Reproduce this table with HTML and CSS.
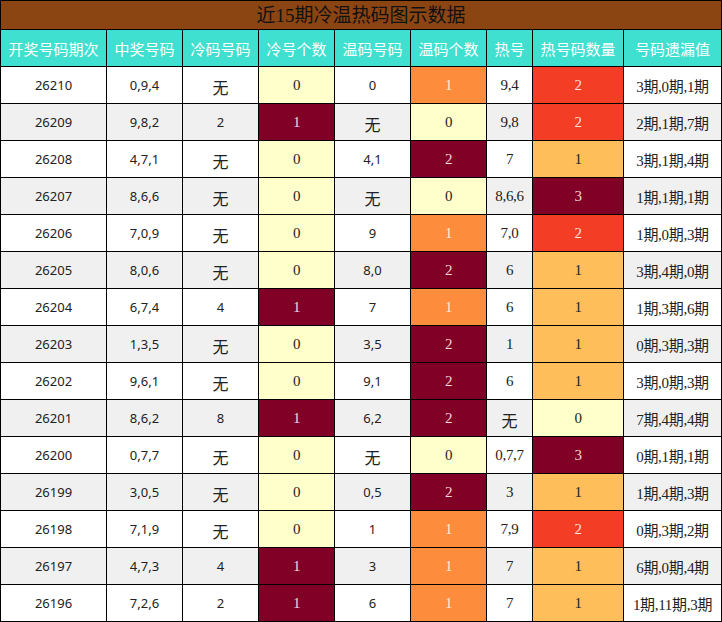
FILE: index.html
```html
<!DOCTYPE html>
<html>
<head>
<meta charset="utf-8">
<link rel="stylesheet" href="styles.css">
</head>
<body>
<div class="grid">
  <div class="title">近15期冷温热码图示数据</div>
  <div class="row head">
    <div class="c">开奖号码期次</div><div class="c">中奖号码</div><div class="c">冷码号码</div><div class="c">冷号个数</div><div class="c">温码号码</div><div class="c">温码个数</div><div class="c">热号</div><div class="c">热号码数量</div><div class="c">号码遗漏值</div>
  </div>
  <div class="row">
    <div class="c s">26210</div><div class="c s">0,9,4</div><div class="c k">无</div><div class="c y">0</div><div class="c s">0</div><div class="c o">1</div><div class="c">9,4</div><div class="c r">2</div><div class="c">3期,0期,1期</div>
  </div>
  <div class="row alt">
    <div class="c s">26209</div><div class="c s">9,8,2</div><div class="c s">2</div><div class="c d">1</div><div class="c k">无</div><div class="c y">0</div><div class="c">9,8</div><div class="c r">2</div><div class="c">2期,1期,7期</div>
  </div>
  <div class="row">
    <div class="c s">26208</div><div class="c s">4,7,1</div><div class="c k">无</div><div class="c y">0</div><div class="c s">4,1</div><div class="c d">2</div><div class="c">7</div><div class="c l">1</div><div class="c">3期,1期,4期</div>
  </div>
  <div class="row alt">
    <div class="c s">26207</div><div class="c s">8,6,6</div><div class="c k">无</div><div class="c y">0</div><div class="c k">无</div><div class="c y">0</div><div class="c">8,6,6</div><div class="c d">3</div><div class="c">1期,1期,1期</div>
  </div>
  <div class="row">
    <div class="c s">26206</div><div class="c s">7,0,9</div><div class="c k">无</div><div class="c y">0</div><div class="c s">9</div><div class="c o">1</div><div class="c">7,0</div><div class="c r">2</div><div class="c">1期,0期,3期</div>
  </div>
  <div class="row alt">
    <div class="c s">26205</div><div class="c s">8,0,6</div><div class="c k">无</div><div class="c y">0</div><div class="c s">8,0</div><div class="c d">2</div><div class="c">6</div><div class="c l">1</div><div class="c">3期,4期,0期</div>
  </div>
  <div class="row">
    <div class="c s">26204</div><div class="c s">6,7,4</div><div class="c s">4</div><div class="c d">1</div><div class="c s">7</div><div class="c o">1</div><div class="c">6</div><div class="c l">1</div><div class="c">1期,3期,6期</div>
  </div>
  <div class="row alt">
    <div class="c s">26203</div><div class="c s">1,3,5</div><div class="c k">无</div><div class="c y">0</div><div class="c s">3,5</div><div class="c d">2</div><div class="c">1</div><div class="c l">1</div><div class="c">0期,3期,3期</div>
  </div>
  <div class="row">
    <div class="c s">26202</div><div class="c s">9,6,1</div><div class="c k">无</div><div class="c y">0</div><div class="c s">9,1</div><div class="c d">2</div><div class="c">6</div><div class="c l">1</div><div class="c">3期,0期,3期</div>
  </div>
  <div class="row alt">
    <div class="c s">26201</div><div class="c s">8,6,2</div><div class="c s">8</div><div class="c d">1</div><div class="c s">6,2</div><div class="c d">2</div><div class="c k">无</div><div class="c y">0</div><div class="c">7期,4期,4期</div>
  </div>
  <div class="row">
    <div class="c s">26200</div><div class="c s">0,7,7</div><div class="c k">无</div><div class="c y">0</div><div class="c k">无</div><div class="c y">0</div><div class="c">0,7,7</div><div class="c d">3</div><div class="c">0期,1期,1期</div>
  </div>
  <div class="row alt">
    <div class="c s">26199</div><div class="c s">3,0,5</div><div class="c k">无</div><div class="c y">0</div><div class="c s">0,5</div><div class="c d">2</div><div class="c">3</div><div class="c l">1</div><div class="c">1期,4期,3期</div>
  </div>
  <div class="row">
    <div class="c s">26198</div><div class="c s">7,1,9</div><div class="c k">无</div><div class="c y">0</div><div class="c s">1</div><div class="c o">1</div><div class="c">7,9</div><div class="c r">2</div><div class="c">0期,3期,2期</div>
  </div>
  <div class="row alt">
    <div class="c s">26197</div><div class="c s">4,7,3</div><div class="c s">4</div><div class="c d">1</div><div class="c s">3</div><div class="c o">1</div><div class="c">7</div><div class="c l">1</div><div class="c">6期,0期,4期</div>
  </div>
  <div class="row">
    <div class="c s">26196</div><div class="c s">7,2,6</div><div class="c s">2</div><div class="c d">1</div><div class="c s">6</div><div class="c o">1</div><div class="c">7</div><div class="c l">1</div><div class="c">1期,11期,3期</div>
  </div>
</div>
</body>
</html>
```
FILE: styles.css
```css
html, body {
  margin: 0;
  padding: 0;
  background: #fff;
}
.grid {
  width: 722px;
  box-sizing: border-box;
  display: grid;
  grid-template-columns: 105px 75px 75px 75px 75px 75px 45px 90px 97px;
  grid-template-rows: 28px repeat(16, 36px);
  gap: 1px;
  padding: 1px;
  background: #000;
  font-family: "Liberation Serif", "Noto Sans CJK SC", serif;
  font-size: 15px;
  color: #222;
}
.title {
  grid-column: 1 / -1;
  background: #8b4513;
  color: #111;
  font-size: 19px;
  display: flex;
  align-items: center;
  justify-content: center;
  line-height: 1;
  padding-top: 1px;
}
.row {
  display: contents;
}
.c {
  background: #fff;
  display: flex;
  align-items: center;
  justify-content: center;
  white-space: nowrap;
  letter-spacing: -0.3px;
}
.row.alt .c {
  background: #f0f0f0;
}
.row.head .c {
  background: #40e0d0;
  color: #fff;
  font-family: "Noto Sans CJK SC", sans-serif;
  font-size: 15px;
  letter-spacing: 0;
}
.s {
  font-family: "Noto Sans", sans-serif;
  font-size: 13px;
  letter-spacing: 0;
}
.k {
  font-family: "Noto Sans CJK SC", sans-serif;
  font-size: 16px;
  padding-top: 3px;
  letter-spacing: 0;
}
.row .c.y { background: #ffffcc; color: #222; }
.row .c.o { background: #fd8d3c; color: #fbe9d8; }
.row .c.r { background: #f43d25; color: #fbe4df; }
.row .c.d { background: #800026; color: #f0d8dc; }
.row .c.l { background: #febf5b; color: #222; }
```
